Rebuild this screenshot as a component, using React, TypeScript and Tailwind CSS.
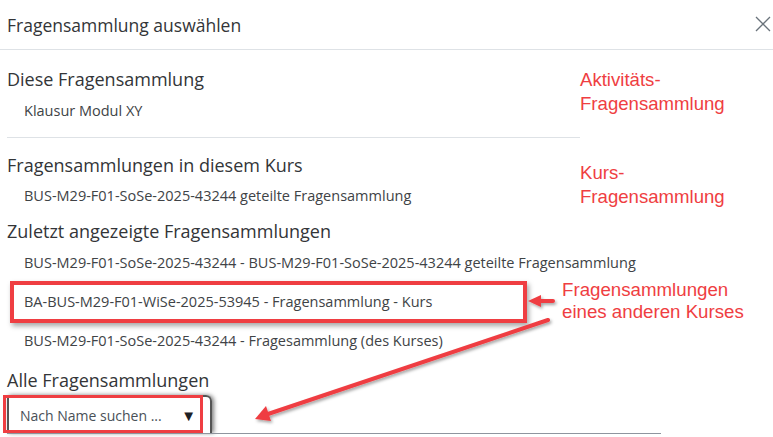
import React from "react";

const Item = ({ children, className = "" }: { children: React.ReactNode; className?: string }) => (
  <div className={`pl-[17px] text-[14.5px] leading-[20px] text-[#404346] ${className}`}>{children}</div>
);

const Heading = ({ children, className = "" }: { children: React.ReactNode; className?: string }) => (
  <h4 className={`text-[18px] leading-[24px] text-[#333538] ${className}`}>{children}</h4>
);

export default function App() {
  return (
    <div className="relative h-[437px] w-[773px] overflow-hidden bg-white font-['Open_Sans',sans-serif]">
      {/* Header */}
      <div className="flex h-[50px] items-center justify-between border-b border-[#dee2e6] pl-[7px] pr-[2px]">
        <h5 className="text-[17.5px] leading-[24px] text-[#333538]">Fragensammlung auswählen</h5>
        <svg width="16" height="16" viewBox="0 0 16 16" className="mb-[2px]">
          <path d="M1 1 L15 15 M15 1 L1 15" stroke="#6a737b" strokeWidth="1.3" fill="none" />
        </svg>
      </div>

      {/* Body */}
      <div className="pl-[7px]">
        <Heading className="mt-[17px]">Diese Fragensammlung</Heading>
        <Item className="mt-[10px]">Klausur Modul XY</Item>
        <div className="mt-[16px] h-px w-[573px] bg-[#dee2e6]" />

        <Heading className="mt-[15px]">Fragensammlungen in diesem Kurs</Heading>
        <Item className="mt-[9px]">BUS-M29-F01-SoSe-2025-43244 geteilte Fragensammlung</Item>

        <Heading className="mt-[13px]">Zuletzt angezeigte Fragensammlungen</Heading>
        <Item className="mt-[10px]">BUS-M29-F01-SoSe-2025-43244 - BUS-M29-F01-SoSe-2025-43244 geteilte Fragensammlung</Item>

        <div className="ml-[3px] mt-[8px] flex h-[42px] w-[517px] items-center border-[4px] border-[#ef3e42] pl-[10px] text-[14.5px] leading-[20px] text-[#404346] shadow-[2px_3px_5px_rgba(0,0,0,0.35)]">
          BA-BUS-M29-F01-WiSe-2025-53945 - Fragensammlung - Kurs
        </div>

        <Item className="mt-[8px]">BUS-M29-F01-SoSe-2025-43244 - Fragesammlung (des Kurses)</Item>

        <Heading className="mt-[17px]">Alle Fragensammlungen</Heading>

        <div className="relative mt-[1px]">
          <div className="ml-0 mt-[3px] flex h-[38px] w-[205px] items-center rounded-tr-[6px] border-[2px] border-b-0 border-[#555] pl-[11px] pr-[14px] text-[14px] text-[#495057] shadow-[2px_0px_4px_rgba(0,0,0,0.5)]">
            <span className="flex-1">Nach Name suchen ...</span>
            <span className="text-[15px] text-[#1d2125]">▼</span>
          </div>
          <div className="w-[654px] border-t border-[#8f959e]" />
          <div className="absolute left-[-4px] top-0 h-[38px] w-[200px] border-[3px] border-[#ef3e42]" />
        </div>
      </div>

      {/* Annotations */}
      <div className="absolute left-[580px] top-[68px] font-['Liberation_Sans',Arial,sans-serif] text-[18.6px] leading-[24px] text-[#ef3e42]">
        Aktivitäts-
        <br />
        Fragensammlung
      </div>
      <div className="absolute left-[580px] top-[161px] font-['Liberation_Sans',Arial,sans-serif] text-[18.6px] leading-[24px] text-[#ef3e42]">
        Kurs-
        <br />
        Fragensammlung
      </div>
      <div className="absolute left-[562px] top-[279px] font-['Liberation_Sans',Arial,sans-serif] text-[18.7px] leading-[22px] text-[#ef3e42]">
        Fragensammlungen
        <br />
        eines anderen Kurses
      </div>

      <svg className="pointer-events-none absolute left-0 top-0" width="773" height="437" viewBox="0 0 773 437">
        <defs>
          <filter id="sh" x="-20%" y="-20%" width="140%" height="140%">
            <feDropShadow dx="1.5" dy="2" stdDeviation="1.5" floodColor="#000" floodOpacity="0.35" />
          </filter>
        </defs>
        <g filter="url(#sh)" fill="#ef3e42" stroke="#ef3e42" strokeLinecap="round">
          <line x1="553" y1="301" x2="538" y2="301" strokeWidth="4" />
          <polygon points="528,301 541,295 541,307" stroke="none" />
          <line x1="548" y1="320" x2="268" y2="414" strokeWidth="4" />
          <polygon points="255,419 266,406 271,421" stroke="none" />
        </g>
      </svg>
    </div>
  );
}
